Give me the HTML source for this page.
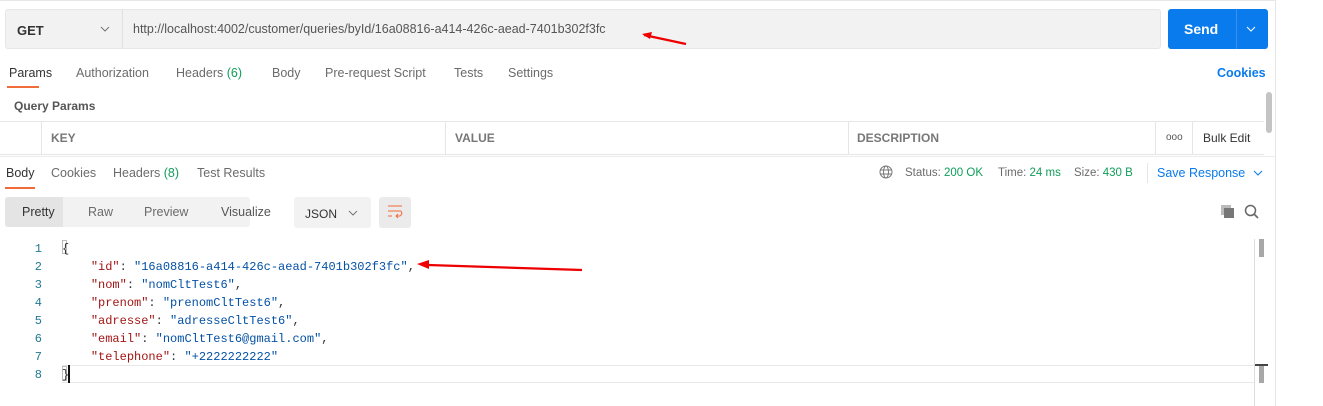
<!DOCTYPE html>
<html><head><meta charset="utf-8"><style>
*{margin:0;padding:0;box-sizing:border-box}
body{width:1323px;height:406px;background:#fff;font-family:"Liberation Sans",Arial,sans-serif;font-size:12px;color:#6b6b6b;position:relative;overflow:hidden}
.a{position:absolute;white-space:nowrap}
.g{color:#0f9d58}
.code{font-family:"Liberation Mono",monospace;font-size:12px}
.k{color:#a31515}.s{color:#0451a5}.p{color:#333}
.ln{color:#237893;width:20px;text-align:right}
</style></head><body>
<div class="a" style="left:0;top:0;width:1275px;height:1px;background:#e6e6e6"></div>
<div class="a" style="left:1275px;top:0;width:1px;height:406px;background:#e6e6e6"></div>
<!-- url bar -->
<div class="a" style="left:5px;top:9px;width:1156px;height:40px;background:#f2f2f2;border:1px solid #e6e6e6;border-radius:3px"></div>
<div class="a" style="left:122px;top:10px;width:1px;height:38px;background:#e0e0e0"></div>
<div class="a" style="left:17px;top:23px;font-size:13px;font-weight:bold;color:#333">GET</div>
<svg class="a" style="left:100px;top:25px" width="10" height="8"><path d="M1 2 L5 6 L9 2" fill="none" stroke="#777" stroke-width="1"/></svg>
<div class="a" style="left:133px;top:22px;font-size:12.5px;color:#555">http://localhost:4002/customer/queries/byId/16a08816-a414-426c-aead-7401b302f3fc</div>
<svg class="a" style="left:640px;top:30px" width="50" height="18"><path d="M46 14 L4 5" stroke="#e00" stroke-width="2.2"/><path d="M2 4 L12 2 L10 9Z" fill="#e00"/></svg>
<div class="a" style="left:1168px;top:9px;width:100px;height:40px;background:#097bed;border-radius:3px"></div>
<div class="a" style="left:1236px;top:9px;width:1px;height:40px;background:#3a8ff0"></div>
<div class="a" style="left:1184px;top:21px;font-size:14px;font-weight:bold;color:#fff">Send</div>
<svg class="a" style="left:1246px;top:26px" width="10" height="7"><path d="M1 1 L5 5 L9 1" fill="none" stroke="#fff" stroke-width="1"/></svg>
<!-- request tabs -->
<div class="a" style="left:9px;top:66px;font-size:12.5px;color:#333">Params</div>
<div class="a" style="left:7px;top:86px;width:32px;height:2px;background:#f26b3a"></div>
<div class="a" style="left:76px;top:66px;font-size:12.5px">Authorization</div>
<div class="a" style="left:176px;top:66px;font-size:12.5px">Headers <span class="g">(6)</span></div>
<div class="a" style="left:272px;top:66px;font-size:12.5px">Body</div>
<div class="a" style="left:325px;top:66px;font-size:12.5px">Pre-request Script</div>
<div class="a" style="left:454px;top:66px;font-size:12.5px">Tests</div>
<div class="a" style="left:508px;top:66px;font-size:12.5px">Settings</div>
<div class="a" style="left:1217px;top:66px;font-size:12.5px;color:#097bed;font-weight:bold">Cookies</div>
<div class="a" style="left:14px;top:99px;font-weight:bold;color:#555">Query Params</div>
<!-- table -->
<div class="a" style="left:0;top:121px;width:1264px;height:1px;background:#e6e6e6"></div>
<div class="a" style="left:0;top:154px;width:1264px;height:1px;background:#e6e6e6"></div>
<div class="a" style="left:41px;top:121px;width:1px;height:34px;background:#e6e6e6"></div>
<div class="a" style="left:445px;top:121px;width:1px;height:34px;background:#e6e6e6"></div>
<div class="a" style="left:848px;top:121px;width:1px;height:34px;background:#e6e6e6"></div>
<div class="a" style="left:1155px;top:121px;width:1px;height:34px;background:#e6e6e6"></div>
<div class="a" style="left:1192px;top:121px;width:1px;height:34px;background:#e6e6e6"></div>
<div class="a" style="left:51px;top:131px;font-weight:bold;color:#777">KEY</div>
<div class="a" style="left:455px;top:131px;font-weight:bold;color:#777">VALUE</div>
<div class="a" style="left:857px;top:131px;font-weight:bold;color:#777">DESCRIPTION</div>
<div class="a" style="left:1166px;top:132px;font-size:10px;color:#555">ooo</div>
<div class="a" style="left:1203px;top:131px;color:#333">Bulk Edit</div>
<div class="a" style="left:1266px;top:92px;width:6px;height:41px;background:#c4c4c4;border-radius:3px"></div>
<div class="a" style="left:0;top:156px;width:1275px;height:1px;background:#ececec"></div>
<!-- response tabs -->
<div class="a" style="left:6px;top:166px;font-size:12.5px;color:#333">Body</div>
<div class="a" style="left:5px;top:187px;width:30px;height:2px;background:#f26b3a"></div>
<div class="a" style="left:51px;top:166px;font-size:12.5px">Cookies</div>
<div class="a" style="left:113px;top:166px;font-size:12.5px">Headers <span class="g">(8)</span></div>
<div class="a" style="left:197px;top:166px;font-size:12.5px">Test Results</div>
<svg class="a" style="left:879px;top:165px" width="14" height="14"><circle cx="7" cy="7" r="6" fill="none" stroke="#777"/><ellipse cx="7" cy="7" rx="2.5" ry="6" fill="none" stroke="#777"/><path d="M1 5H13M1 9H13" stroke="#777"/></svg>
<div class="a" style="left:905px;top:167px;font-size:11.5px">Status: <span class="g">200 OK</span></div>
<div class="a" style="left:998px;top:167px;font-size:11.5px">Time: <span class="g">24 ms</span></div>
<div class="a" style="left:1074px;top:167px;font-size:11.5px">Size: <span class="g">430 B</span></div>
<div class="a" style="left:1147px;top:163px;width:1px;height:20px;background:#e6e6e6"></div>
<div class="a" style="left:1157px;top:166px;font-size:12.5px;color:#097bed">Save Response</div>
<svg class="a" style="left:1253px;top:170px" width="10" height="7"><path d="M1 1 L5 5 L9 1" fill="none" stroke="#097bed"/></svg>
<!-- toolbar -->
<div class="a" style="left:5px;top:197px;width:245px;height:30px;background:#f2f2f2;border-radius:3px"></div>
<div class="a" style="left:5px;top:197px;width:58px;height:30px;background:#e4e4e4;border-radius:3px 0 0 3px"></div>
<div class="a" style="left:22px;top:205px;font-size:12.5px;color:#333">Pretty</div>
<div class="a" style="left:88px;top:205px;font-size:12.5px">Raw</div>
<div class="a" style="left:144px;top:205px;font-size:12.5px">Preview</div>
<div class="a" style="left:221px;top:205px;font-size:12.5px;color:#555">Visualize</div>
<div class="a" style="left:294px;top:197px;width:77px;height:31px;background:#f2f2f2;border-radius:3px"></div>
<div class="a" style="left:305px;top:207px;font-size:12px;color:#333">JSON</div>
<svg class="a" style="left:348px;top:210px" width="10" height="7"><path d="M1 1 L5 5 L9 1" fill="none" stroke="#777"/></svg>
<div class="a" style="left:379px;top:197px;width:32px;height:31px;background:#ebebeb;border-radius:3px"></div>
<svg class="a" style="left:387px;top:205px" width="16" height="14"><path d="M1 1H15M1 6H14M1 11H5" stroke="#f26b3a" fill="none"/><path d="M14 6 Q16 9 13 11 H9 M11 9 L9 11 L11 13" stroke="#f26b3a" fill="none"/></svg>
<svg class="a" style="left:1220px;top:204px" width="16" height="15"><rect x="1" y="1" width="10" height="10" fill="#bbb"/><rect x="4" y="4" width="10" height="10" fill="#777"/></svg>
<svg class="a" style="left:1244px;top:204px" width="16" height="16"><circle cx="6.5" cy="6.5" r="5" fill="none" stroke="#666" stroke-width="1.5"/><path d="M10 10L14 14" stroke="#666" stroke-width="1.6"/></svg>
<!-- editor -->
<div class="a" style="left:1254px;top:239px;width:1px;height:167px;background:#ddd"></div>
<div class="a" style="left:1259px;top:239px;width:5px;height:18px;background:#a8a8a8"></div>
<div class="a" style="left:1259px;top:365px;width:5px;height:18px;background:#a8a8a8"></div>
<div class="a" style="left:1255px;top:364px;width:13px;height:2px;background:#444"></div>
<div class="a" style="left:62px;top:365px;width:1192px;height:1px;background:#e8e8e8"></div>
<div class="a" style="left:62px;top:382px;width:1192px;height:1px;background:#e8e8e8"></div>
<div class="a" style="left:68px;top:365px;width:2px;height:18px;background:#111"></div>
<div class="a" style="left:62px;top:240px;width:5px;height:14px;border:1px solid #bbb"></div>
<div class="a" style="left:62px;top:366px;width:5px;height:15px;border:1px solid #bbb"></div>
<div class="a code" style="left:22px;top:240px;line-height:18px">
<div class="ln">1</div><div class="ln">2</div><div class="ln">3</div><div class="ln">4</div><div class="ln">5</div><div class="ln">6</div><div class="ln">7</div><div class="ln">8</div>
</div>
<div class="a code p" style="left:62px;top:240px;line-height:18px;white-space:pre">{
    <span class="k">"id"</span>: <span class="s">"16a08816-a414-426c-aead-7401b302f3fc"</span>,
    <span class="k">"nom"</span>: <span class="s">"nomCltTest6"</span>,
    <span class="k">"prenom"</span>: <span class="s">"prenomCltTest6"</span>,
    <span class="k">"adresse"</span>: <span class="s">"adresseCltTest6"</span>,
    <span class="k">"email"</span>: <span class="s">"nomCltTest6@gmail.com"</span>,
    <span class="k">"telephone"</span>: <span class="s">"+2222222222"</span>
}</div>
<svg class="a" style="left:414px;top:258px" width="170" height="16"><path d="M168 12 L14 7" stroke="#e00" stroke-width="2.2"/><path d="M3 6 L15 2 L15 11Z" fill="#e00"/></svg>
</body></html>
